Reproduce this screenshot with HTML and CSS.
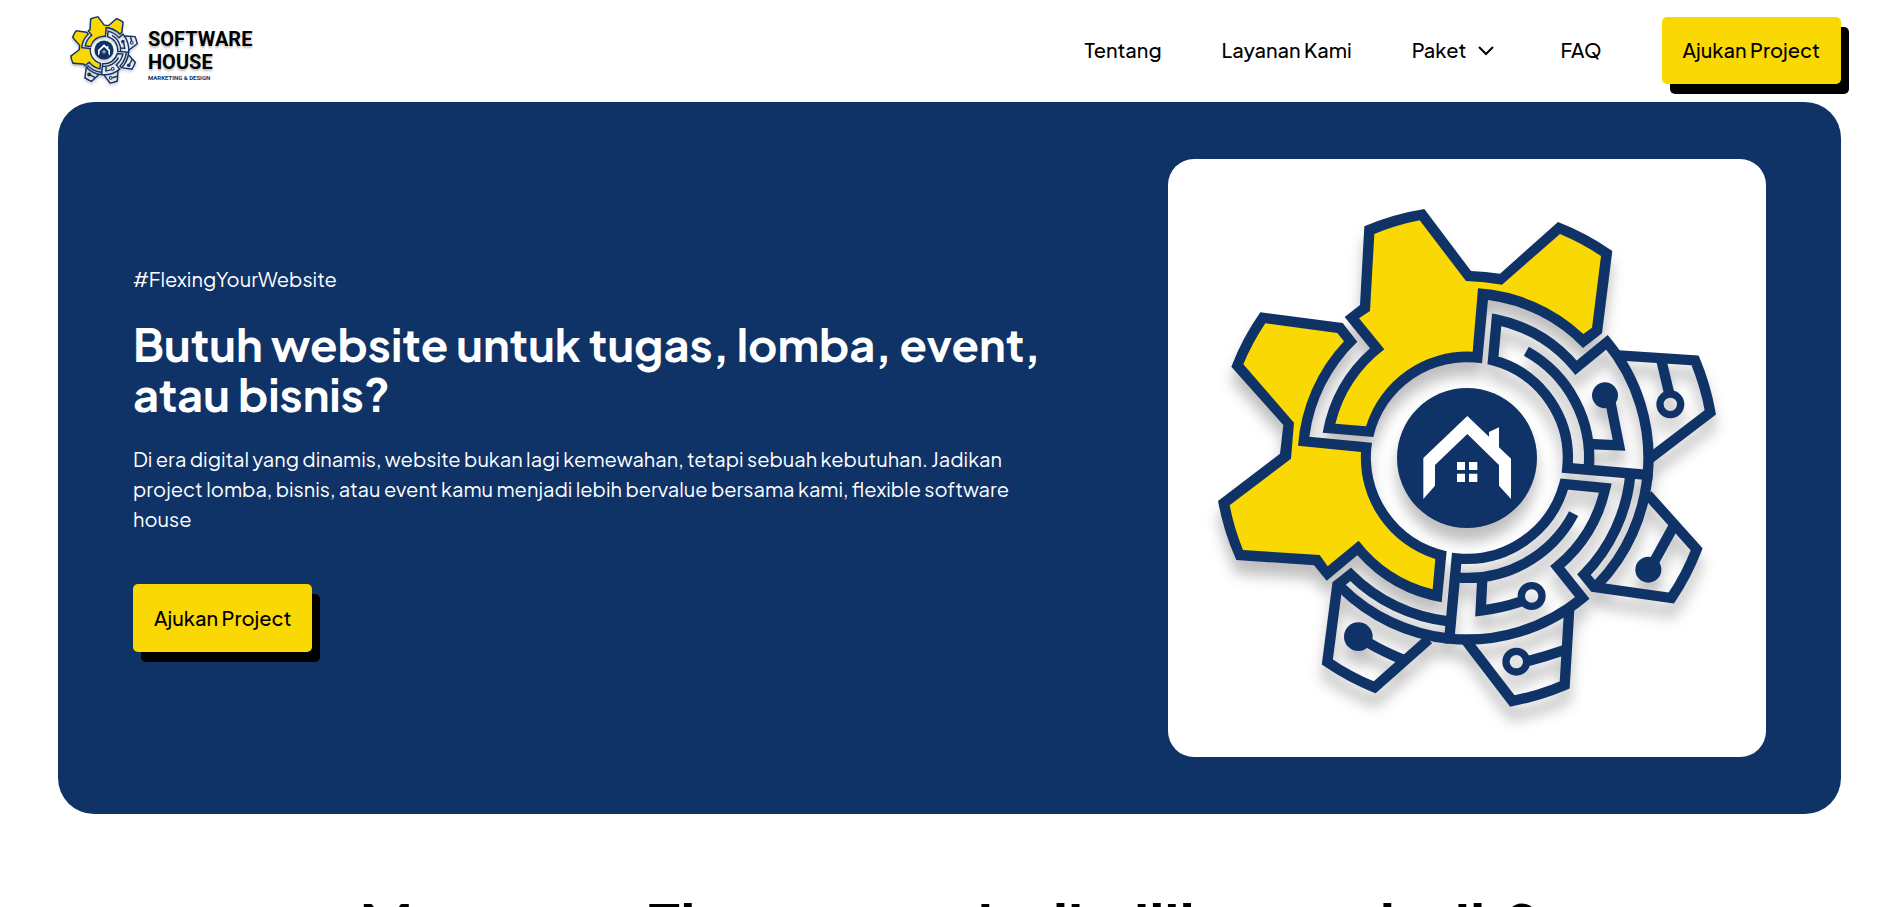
FILE: index.html
```html
<!DOCTYPE html>
<html lang="id">
<head>
<meta charset="utf-8">
<meta name="viewport" content="width=device-width, initial-scale=1">
<title>Software House</title>
<link rel="stylesheet" href="styles.css">
</head>
<body>
<svg class="sprite" aria-hidden="true">
  <symbol id="gear" viewBox="24 27 1794 1794">
    <g class="gear-shadow">
      <!-- yellow half -->
      <path class="navy" d="M301 487L548 519L592 575A479 479 0 0 0 448 860L636 878A288 288 0 0 0 860 1204L845 1357A440 440 0 0 1 592 1216L500 1292L462 1246L229 1230A758 758 0 0 1 174 1053L360 911L370 825L214 650A758 758 0 0 1 301 487Z"/>
      <path class="yellow" d="M316 520L532 549L552 574A509 509 0 0 0 414 887L603 906A318 318 0 0 0 826 1227L818 1318A408 408 0 0 1 596 1172L503 1249L479 1215L249 1200A726 726 0 0 1 209 1066L393 926L402 818L250 643A726 726 0 0 1 316 520Z"/>
      <path class="navy" d="M793 177L933 363Q978 365 1020 371L1194 216A758 758 0 0 1 1357 303L1326 550L1269 594A479 479 0 0 0 984 450L966 640A288 288 0 0 0 640 861L488 848A440 440 0 0 1 630 595L554 501L600 465L613 229A758 758 0 0 1 793 177Z"/>
      <path class="yellow" d="M779 211L918 393Q974 395 1026 404L1200 252A726 726 0 0 1 1323 318L1296 533L1270 552A509 509 0 0 0 954 415L938 605A318 318 0 0 0 618 829L526 821A408 408 0 0 1 673 598L597 505L630 483L643 252A726 726 0 0 1 779 211Z"/>
      <!-- circuit half -->
      <g class="trace">
        <path d="M999 631L1010 509A424 424 0 0 1 1248 653L1341 577A544 544 0 0 1 1463 975L1222 954A303 303 0 0 0 999 631Z"/>
        <path d="M1099 604A366 366 0 0 1 1286 958"/>
        <path d="M1286 882L1377 886L1352 760"/>
        <path d="M1375 616L1605 631A743 743 0 0 1 1651 787L1466 928"/>
        <path d="M1505 635L1527 728"/>
        <path d="M1411 975A493 493 0 0 1 1272 1274L1302 1311L1534 1344A742 742 0 0 0 1610 1198L1463 1034"/>
        <path d="M1463 970A544 544 0 0 1 1313 1304"/>
        <path d="M1540 1130L1478 1243"/>
        <path d="M890 1225A303 303 0 0 0 1213 1002L1336 1014A425 425 0 0 1 1192 1250L1267 1344A544 544 0 0 1 868 1466Z"/>
        <path d="M868 1466A544 544 0 0 1 543 1312"/>
        <path d="M1241 1091A360 360 0 0 1 888 1282"/>
        <path d="M967 1285L962 1382Q1022 1375 1082 1355"/>
        <path d="M918 1472L1057 1653A742 742 0 0 0 1214 1605L1228 1372"/>
        <path d="M1105 1533Q1155 1520 1210 1501"/>
        <path d="M866 1414A493 493 0 0 1 572 1273L532 1305L502 1536A742 742 0 0 0 644 1612L806 1468"/>
        <path d="M625 1478Q673 1506 732 1530"/>
      </g>
      <g class="node">
        <circle cx="1531" cy="763" r="31"/>
        <circle cx="1115" cy="1338" r="31"/>
        <circle cx="1069" cy="1535" r="31"/>
      </g>
      <g class="navy">
        <circle cx="1335" cy="736" r="39"/>
        <circle cx="1465" cy="1259" r="39"/>
        <circle cx="595" cy="1460" r="43"/>
        <circle cx="921" cy="924" r="210"/>
      </g>
    </g>
    <path class="white" d="M922 798L790 924V1047L825 1007V945L922 852L1017 945V1007L1053 1047V926L1017 892V832L987 846V860Z"/>
    <path class="white" d="M891 936h24v24h-24zM927 936h25v24h-25zM891 971h24v25h-24zM927 971h25v25h-25z"/>
  </symbol>
</svg>

<header class="header">
  <a class="brand" href="#">
    <svg class="brand-mark" viewBox="174 177 1494 1494" aria-hidden="true"><use href="#gear" x="24" y="27" width="1794" height="1794"/></svg>
    <span class="brand-text">
      <span class="brand-name">SOFTWARE<br>HOUSE</span>
      <span class="brand-sub">MARKETING &amp; DESIGN</span>
    </span>
  </a>
  <nav class="nav">
    <a href="#tentang">Tentang</a>
    <a href="#layanan">Layanan Kami</a>
    <a class="nav-drop" href="#paket">Paket
      <svg class="chevron" viewBox="0 0 28 28" aria-hidden="true"><path d="M7 11L14 18L21 11"/></svg>
    </a>
    <a href="#faq">FAQ</a>
    <button class="cta" type="button">Ajukan Project</button>
  </nav>
</header>

<main>
  <section class="hero">
    <div class="hero-copy">
      <p class="tag">#FlexingYourWebsite</p>
      <h1>Butuh website untuk tugas, lomba, event, atau bisnis?</h1>
      <p class="lead">Di era digital yang dinamis, website bukan lagi kemewahan, tetapi sebuah kebutuhan. Jadikan project lomba, bisnis, atau event kamu menjadi lebih bervalue bersama kami, flexible software house</p>
      <button class="cta" type="button">Ajukan Project</button>
    </div>
    <div class="hero-card">
      <svg viewBox="0 0 598 598" role="img" aria-label="Software House"><use href="#gear" width="598" height="598"/></svg>
    </div>
  </section>
  <section class="why" id="tentang">
    <h2>Mengapa Flexco menjadi pilihan terbaik?</h2>
  </section>
</main>
</body>
</html>
```
FILE: styles.css
```css
* { box-sizing: border-box; }

body {
  margin: 0;
  background: #fff;
  color: #000;
  font-family: "Plus Jakarta Sans", Inter, "Open Sans", sans-serif;
  font-size: 20px;
  line-height: 30px;
  overflow-x: hidden;
}

h1, h2, p { margin: 0; }
a { color: inherit; text-decoration: none; }

.sprite { position: absolute; width: 0; height: 0; }
.navy { fill: #103367; }
.yellow { fill: #fad803; }
.white { fill: #fff; }
.trace { fill: none; stroke: #103367; stroke-width: 31; stroke-miterlimit: 8; }
.node { fill: none; stroke: #103367; stroke-width: 22; }
.gear-shadow { filter: drop-shadow(0 42px 20px rgba(0, 0, 0, 0.25)); }

.header {
  display: flex;
  align-items: center;
  justify-content: space-between;
  padding: 17px 55px 18px 70px;
}

.brand { display: flex; align-items: center; gap: 10px; }
.brand-mark { width: 68px; height: 68px; margin: -2px 0 -1px; overflow: visible; }
.brand-text { display: flex; flex-direction: column; padding-top: 8px; font-family: Roboto, sans-serif; font-weight: 700; }
.brand-name { font-size: 20px; line-height: 23px; text-shadow: 0 2px 2px rgba(0, 0, 0, 0.25); }
.brand-sub { color: #103367; font-size: 6px; line-height: 8px; }

.nav { display: flex; align-items: center; gap: 60px; font-weight: 500; }
.nav a { padding-bottom: 2px; }
.nav-drop { display: flex; align-items: center; gap: 6px; }
.chevron { width: 28px; height: 28px; fill: none; stroke: #000; stroke-width: 2; }

.cta {
  padding: 18px 21px 19px;
  border: 0;
  border-radius: 5px;
  background: #fad803;
  box-shadow: 8px 10px 0 #000;
  color: #000;
  font: inherit;
  font-weight: 500;
  cursor: pointer;
}

.hero {
  display: flex;
  align-items: center;
  justify-content: space-between;
  margin: 0 55px 0 58px;
  padding: 57px 75px;
  border-radius: 36px;
  background: #103367;
  color: #fff;
}

.hero-copy { flex: 0 1 920px; }
.hero h1 { margin: 25px 0; font-size: 45px; font-weight: 700; line-height: 50px; }
.lead { margin-bottom: 50px; }
.hero .cta { padding-top: 19px; }

.hero-card { flex: 0 0 598px; border-radius: 26px; background: #fff; }
.hero-card svg { display: block; width: 100%; }

.why { padding: 78px 55px 40px 58px; text-align: center; }
.why h2 { font-size: 60px; font-weight: 700; line-height: 64px; }
```
